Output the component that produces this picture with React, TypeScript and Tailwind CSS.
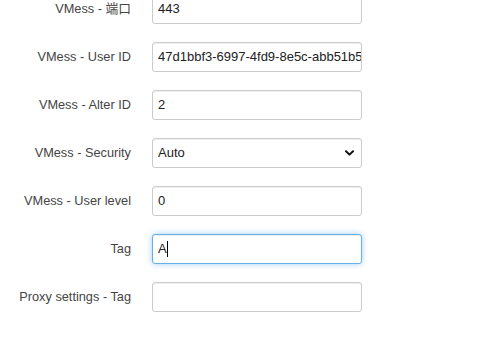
import React from 'react';

type Row = {
  label: string;
  value?: string;
  kind?: 'text' | 'select' | 'focus';
};

const rows: Row[] = [
  { label: 'VMess - 端口', value: '443' },
  { label: 'VMess - User ID', value: '47d1bbf3-6997-4fd9-8e5c-abb51b5f2c4e' },
  { label: 'VMess - Alter ID', value: '2' },
  { label: 'VMess - Security', value: 'Auto', kind: 'select' },
  { label: 'VMess - User level', value: '0' },
  { label: 'Tag', value: 'A', kind: 'focus' },
  { label: 'Proxy settings - Tag', value: '' },
];

function Field({ row }: { row: Row }) {
  if (row.kind === 'select') {
    return (
      <div className="w-[210px] h-[30px] flex items-center justify-between pl-[5px] pr-[7px] border border-[#cccccc] rounded-[3px] bg-white shadow-[inset_0_1px_1px_rgba(0,0,0,0.075)] text-[13px] text-[#222]">
        <span>{row.value}</span>
        <svg width="9" height="6" viewBox="0 0 9 6" fill="none">
          <path d="M1 1.2L4.5 4.6L8 1.2" stroke="#111" strokeWidth="2" strokeLinecap="round" strokeLinejoin="round" />
        </svg>
      </div>
    );
  }

  if (row.kind === 'focus') {
    return (
      <div className="w-[210px] h-[30px] flex items-center pl-[5px] border border-[#66afe9] rounded-[3px] bg-white shadow-[inset_0_1px_1px_rgba(0,0,0,0.075),0_0_6px_rgba(102,175,233,0.6)] text-[13px] text-[#222]">
        <span>{row.value}</span>
        <span className="w-px h-[16px] bg-black" />
      </div>
    );
  }

  return (
    <div className="w-[210px] h-[30px] flex items-center pl-[5px] border border-[#cccccc] rounded-[3px] bg-white shadow-[inset_0_1px_1px_rgba(0,0,0,0.075)] text-[13px] text-[#222] overflow-hidden whitespace-nowrap">
      {row.value}
    </div>
  );
}

export default function App() {
  return (
    <div className="w-[490px] h-[338px] overflow-hidden bg-white font-['Liberation_Sans','Noto_Sans_CJK_SC',sans-serif]">
      <div className="-mt-[6px] flex flex-col gap-[18px]">
        {rows.map((row) => (
          <div key={row.label} className="flex items-center">
            <div className="w-[131px] text-right text-[12.75px] text-[#444] whitespace-nowrap">{row.label}</div>
            <div className="ml-[21px]">
              <Field row={row} />
            </div>
          </div>
        ))}
      </div>
    </div>
  );
}
